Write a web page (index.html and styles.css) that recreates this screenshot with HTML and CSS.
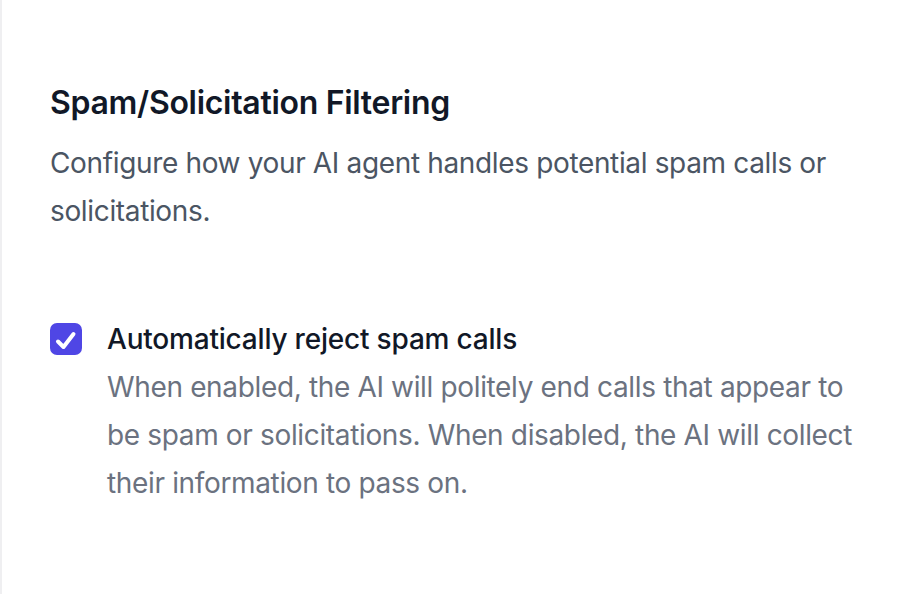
FILE: index.html
```html
<!DOCTYPE html>
<html lang="en">
<head>
  <meta charset="UTF-8" />
  <meta name="viewport" content="width=device-width, initial-scale=1.0"/>
  <title>Spam Filtering</title>
  <link rel="stylesheet" href="styles.css">
</head>
<body>

  <div class="panel">
    <section class="section">
      <h3>Spam/Solicitation Filtering</h3>
      <p class="lead">Configure how your AI agent handles potential spam calls or solicitations.</p>

      <div class="option">
        <div class="check-wrap">
          <label class="checkbox">
            <input type="checkbox" id="reject-spam" checked />
            <svg viewBox="0 0 32 32" aria-hidden="true">
              <polyline points="8,18.5 13.5,24 23.5,11" />
            </svg>
          </label>
        </div>
        <div class="option-text">
          <label for="reject-spam" class="option-label">Automatically reject spam calls</label>
          <p class="option-help">When enabled, the AI will politely end calls that appear to be spam or solicitations. When disabled, the AI will collect their information to pass on.</p>
        </div>
      </div>
    </section>
  </div>

</body>
</html>
```

FILE: styles.css
```css
body {
  font-family: 'Inter', 'Noto Sans', sans-serif;
  background: #fff;
  margin: 0;
}

.panel {
  min-height: 594px;
  border-left: 2px solid #efeff1;
  box-sizing: border-box;
}

.section {
  padding: 75px 34px 0 48px;
}

h3 {
  margin: 0;
  font-size: 32px;
  line-height: 56px;
  font-weight: 600;
  letter-spacing: -0.3px;
  color: #111827;
}

.lead {
  margin: 8px 0 0;
  font-size: 28px;
  line-height: 48px;
  letter-spacing: -0.35px;
  color: #4b5563;
}

.option {
  display: flex;
  margin-top: 80px;
}

.check-wrap {
  display: flex;
  align-items: center;
  height: 48px;
}

.checkbox {
  position: relative;
  width: 32px;
  height: 32px;
  display: block;
}

.checkbox input {
  appearance: none;
  margin: 0;
  width: 32px;
  height: 32px;
  border-radius: 7px;
  background: #4f46e5;
  display: block;
}

.checkbox svg {
  position: absolute;
  top: 0;
  left: 0;
  width: 32px;
  height: 32px;
  fill: none;
  stroke: #fff;
  stroke-width: 4;
  stroke-linecap: round;
  stroke-linejoin: round;
  pointer-events: none;
}

.option-text {
  margin-left: 25px;
  font-size: 28px;
  line-height: 48px;
}

.option-label {
  display: block;
  font-weight: 500;
  letter-spacing: -0.2px;
  color: #111827;
}

.option-help {
  margin: 0;
  letter-spacing: -0.35px;
  color: #6b7280;
}
```
